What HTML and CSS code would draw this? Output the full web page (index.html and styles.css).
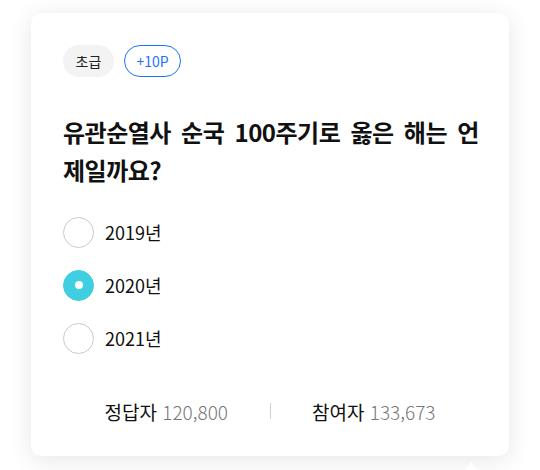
FILE: index.html
```html
<!DOCTYPE html>
<html lang="ko">
<head>
<meta charset="utf-8">
<link rel="stylesheet" href="styles.css">
</head>
<body>
<div class="stage">
  <div class="card">
    <div class="tags">
      <span class="tag tag-level">초급</span>
      <span class="tag tag-point">+10P</span>
    </div>
    <h2 class="question">유관순열사 순국 100주기로 옳은 해는 언제일까요?</h2>
    <ul class="options">
      <li class="option"><span class="radio"></span><span class="label">2019년</span></li>
      <li class="option"><span class="radio checked"></span><span class="label">2020년</span></li>
      <li class="option"><span class="radio"></span><span class="label">2021년</span></li>
    </ul>
    <div class="stats">
      <div class="stat">정답자 <span class="num">120,800</span></div>
      <div class="divider"></div>
      <div class="stat">참여자 <span class="num">133,673</span></div>
    </div>
  </div>
  <div class="tail"></div>
</div>
</body>
</html>
```
FILE: styles.css
```css
* { box-sizing: border-box; }
html, body { margin: 0; padding: 0; background: #ffffff; }
body {
  font-family: "Noto Sans CJK KR", "Noto Sans", sans-serif;
  color: #111;
  width: 540px;
  height: 470px;
  overflow: hidden;
}
.stage {
  position: relative;
  padding: 13px 31px 0 31px;
}
.card {
  width: 478px;
  height: 443px;
  background: #fff;
  border-radius: 10px;
  box-shadow: 0 4px 24px rgba(0,0,0,0.10);
  padding: 32px 32px 0 32px;
  display: flex;
  flex-direction: column;
}
.tags { display: flex; gap: 10px; }
.tag {
  height: 32px;
  border-radius: 16px;
  display: inline-flex;
  align-items: center;
  justify-content: center;
  font-size: 14px;
  line-height: 1;
}
.tag-level { width: 51px; background: #f3f3f3; color: #222; }
.tag-point { width: 57px; border: 1px solid #1a73ff; color: #1a73ff; }
.question {
  margin: 36px -8px 0 0;
  font-size: 24px;
  font-weight: 700;
  line-height: 38px;
  letter-spacing: -0.5px;
  word-spacing: 4px;
  color: #111;
}
.options {
  list-style: none;
  margin: 28px 0 0 0;
  padding: 0;
  display: flex;
  flex-direction: column;
  gap: 23px;
}
.option { display: flex; align-items: center; height: 30px; }
.radio {
  width: 31px;
  height: 31px;
  border-radius: 50%;
  border: 1px solid #cacaca;
  background: #fff;
  flex: none;
  display: flex;
  align-items: center;
  justify-content: center;
}
.radio.checked { background: #3fcfe0; border-color: #3fcfe0; }
.radio.checked::after {
  content: "";
  width: 8px;
  height: 8px;
  border-radius: 50%;
  background: #fff;
}
.label { margin-left: 11px; font-size: 18px; color: #111; }
.stats {
  margin-top: 46px;
  display: flex;
  align-items: center;
  height: 24px;
}
.stat { flex: 1; text-align: center; font-size: 19px; color: #111; }
.num { color: #777; font-weight: 300; }
.divider { width: 1px; height: 16px; background: #d0d0d0; }
.tail {
  position: absolute;
  left: 465px;
  top: 462px;
  width: 0;
  height: 0;
  border-left: 6px solid transparent;
  border-right: 6px solid transparent;
  border-bottom: 8px solid #fff;
}
```
